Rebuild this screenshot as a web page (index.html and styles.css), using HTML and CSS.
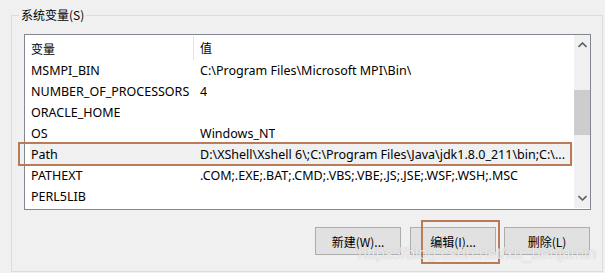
FILE: index.html
```html
<!DOCTYPE html>
<html>
<head>
<meta charset="utf-8">
<link rel="stylesheet" href="styles.css">
</head>
<body>
<div class="group">
  <span class="legend">系统变量(S)</span>
  <div class="list">
    <div class="cols">
      <div class="header">
        <div class="c1">变量</div>
        <div class="c2">值</div>
      </div>
      <div class="row"><div class="c1">MSMPI_BIN</div><div class="c2">C:\Program Files\Microsoft MPI\Bin\</div></div>
      <div class="row"><div class="c1">NUMBER_OF_PROCESSORS</div><div class="c2">4</div></div>
      <div class="row"><div class="c1">ORACLE_HOME</div><div class="c2"></div></div>
      <div class="row"><div class="c1">OS</div><div class="c2">Windows_NT</div></div>
      <div class="row sel"><div class="c1">Path</div><div class="c2">D:\XShell\Xshell 6\;C:\Program Files\Java\jdk1.8.0_211\bin;C:\...</div><span class="mark"></span></div>
      <div class="row"><div class="c1">PATHEXT</div><div class="c2">.COM;.EXE;.BAT;.CMD;.VBS;.VBE;.JS;.JSE;.WSF;.WSH;.MSC</div></div>
      <div class="row"><div class="c1">PERL5LIB</div><div class="c2"></div></div>
    </div>
    <div class="scroll">
      <svg class="arrow" width="9" height="6" viewBox="0 0 9 6"><path d="M0.5 5 L4.5 1 L8.5 5" fill="none" stroke="#606060" stroke-width="1.6"/></svg>
      <div class="track"><div class="thumb"></div></div>
      <svg class="arrow" width="9" height="6" viewBox="0 0 9 6"><path d="M0.5 1 L4.5 5 L8.5 1" fill="none" stroke="#606060" stroke-width="1.6"/></svg>
    </div>
  </div>
  <div class="buttons">
    <button class="btn">新建(W)...</button>
    <button class="btn edit">编辑(I)...<span class="mark2"></span></button>
    <button class="btn">删除(L)</button>
  </div>
</div>
<div class="watermark">https://blog.csdn.net/xu_benjamin</div>
</body>
</html>
```
FILE: styles.css
```css
html, body {
  margin: 0;
  padding: 0;
  background: #f0f0f0;
  width: 605px;
  height: 273px;
  overflow: hidden;
  font-family: "Noto Sans", "Noto Sans CJK SC", sans-serif;
  font-size: 12.5px;
  color: #000;
}

.group {
  position: relative;
  box-sizing: border-box;
  margin: 15px 2px 0 11px;
  width: 592px;
  height: 257px;
  border: 1px solid #dcdcdc;
  padding: 18px 11px 0 12px;
}

.legend {
  position: absolute;
  left: 7px;
  top: -9px;
  padding: 0 2px;
  background: #f0f0f0;
  line-height: 16px;
  font-size: 12px;
  font-family: "Noto Sans CJK SC", sans-serif;
}

.list {
  position: relative;
  box-sizing: border-box;
  width: 567px;
  height: 176px;
  border: 1px solid #828790;
  background: #fff;
  display: flex;
}

.cols {
  flex: 1;
  display: flex;
  flex-direction: column;
  position: relative;
}

.header {
  display: flex;
  height: 25px;
  align-items: center;
  font-size: 12px;
  font-family: "Noto Sans CJK SC", sans-serif;
}

.header .c1 {
  border-right: 1px solid #e5e5e5;
  height: 24px;
  margin-top: 1px;
  display: flex;
  align-items: center;
}

.row {
  display: flex;
  height: 21px;
  align-items: center;
  white-space: nowrap;
  position: relative;
}

.c1 {
  box-sizing: border-box;
  width: 169px;
  padding-left: 6px;
  flex: none;
}

.c2 {
  padding-left: 6px;
  overflow: hidden;
}

.row.sel {
  background: linear-gradient(to right, #fff 5px, #f0f0f0 5px);
}

.mark {
  position: absolute;
  left: -7px;
  top: -2px;
  width: 550px;
  height: 20px;
  border: 2px solid #b97b58;
}

.scroll {
  width: 16px;
  flex: none;
  background: #f0f0f0;
  display: flex;
  flex-direction: column;
  align-items: center;
  margin: 0 0 1px 1px;
}

.arrow {
  flex: none;
  margin: 7px 0;
}

.track {
  flex: 1;
  width: 100%;
  padding-top: 35px;
  box-sizing: border-box;
}

.thumb {
  width: 100%;
  height: 45px;
  background: #cdcdcd;
}

.buttons {
  display: flex;
  justify-content: flex-end;
  gap: 9px;
  margin-top: 17px;
  padding-right: 1px;
}

.btn {
  position: relative;
  box-sizing: border-box;
  width: 86px;
  height: 28px;
  border: 1px solid #adadad;
  background: #e1e1e1;
  font-family: "Noto Sans CJK SC", sans-serif;
  font-size: 12px;
  color: #000;
  padding: 0;
}

.btn.edit {
  margin-right: -1px;
}

.mark2 {
  position: absolute;
  left: 10px;
  top: -8px;
  width: 75px;
  height: 40px;
  border: 2px solid #b97b58;
}

.watermark {
  position: absolute;
  left: 358px;
  top: 245px;
  font-family: "Liberation Sans", sans-serif;
  font-size: 16px;
  line-height: 18px;
  color: rgba(255, 255, 255, 0.75);
  text-shadow: 0 0 1px rgba(120, 120, 120, 0.5);
  white-space: nowrap;
}
```
